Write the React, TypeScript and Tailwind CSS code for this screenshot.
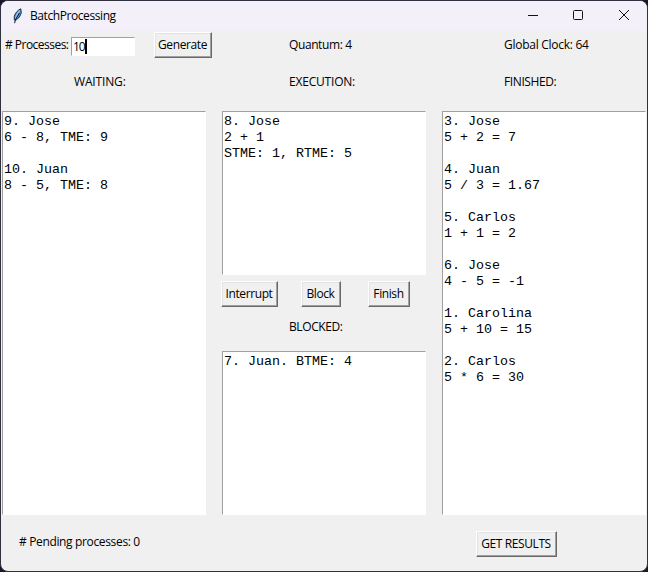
import type { ReactNode } from "react";

const waiting = ["9. Jose", "6 - 8, TME: 9", "", "10. Juan", "8 - 5, TME: 8"];
const execution = ["8. Jose", "2 + 1", "STME: 1, RTME: 5"];
const blocked = ["7. Juan. BTME: 4"];
const finished = [
  "3. Jose", "5 + 2 = 7", "",
  "4. Juan", "5 / 3 = 1.67", "",
  "5. Carlos", "1 + 1 = 2", "",
  "6. Jose", "4 - 5 = -1", "",
  "1. Carolina", "5 + 10 = 15", "",
  "2. Carlos", "5 * 6 = 30",
];

function TextArea({ lines, className }: { lines: string[]; className: string }) {
  return (
    <div
      className={`w-[204px] shrink-0 border border-t-[#a0a0a0] border-r-white border-b-white border-l-[#a0a0a0] bg-white pt-[2px] pl-[1px] font-['Liberation_Mono',monospace] text-[13.333px] leading-4 tracking-normal whitespace-pre text-black ${className}`}
    >
      {lines.map((line, i) => (
        <div key={i} className="h-4">{line}</div>
      ))}
    </div>
  );
}

function Button({ children, className }: { children: ReactNode; className: string }) {
  return (
    <button
      className={`h-[26px] shrink-0 border-t border-r border-b border-l border-t-white border-r-[#696969] border-b-[#696969] border-l-white bg-[#f0f0f0] pr-[1px] text-center leading-[22px] whitespace-nowrap shadow-[inset_-1px_-1px_0_#a0a0a0,inset_1px_1px_0_#e3e3e3] ${className}`}
    >
      {children}
    </button>
  );
}

function Feather() {
  return (
    <svg className="ml-[11px] h-4 w-3" viewBox="0 0 12 16">
      <path d="M8.8 .8C6 1.8 3.2 5 2.3 8.2l-.1 3.6 1.4.5C6.4 11 8.8 7.4 9.3 4.6Z" fill="#4b93e0" stroke="#1b2430" strokeWidth=".9" />
      <path d="M7.6 2.6C5.6 5 4.4 7.6 3.4 10.4" stroke="#9ccbf7" strokeWidth="1.1" fill="none" />
      <path d="M7.4 5 3.4 11.7 2.6 15.2" stroke="#10151c" strokeWidth="1" fill="none" />
    </svg>
  );
}

export default function App() {
  return (
    <div className="h-[572px] w-[648px] overflow-hidden bg-[#16162a]">
      <div className="h-[572px] w-[648px] overflow-hidden rounded-[8px] border border-[#30303f] bg-[#f0f0f0] font-['Open_Sans','Noto_Sans',sans-serif] text-[12px] leading-4 tracking-[-0.4px] text-black">
        <header className="flex h-[30px] items-center bg-[#f3f0f9]">
          <Feather />
          <span className="ml-[6px] tracking-[-0.42px]">BatchProcessing</span>
          <svg className="ml-auto h-[30px] w-[138px]" viewBox="0 0 138 30" fill="none" stroke="#111" strokeWidth="1">
            <path d="M19 14.5h10" />
            <rect x="64.5" y="9.5" width="9" height="9" rx="1" />
            <path d="m110 9 10 10m0-10-10 10" />
          </svg>
        </header>

        <div className="flex h-[32px] items-start">
          <span className="mt-[6px] ml-[4px] w-[66px] tracking-[-0.52px] whitespace-nowrap"># Processes:</span>
          <div className="mt-[6px] flex h-[19px] w-[64px] items-center border border-t-[#a0a0a0] border-r-white border-b-white border-l-[#a0a0a0] bg-white pl-[1px]">
            <span className="tracking-[-1px]">10</span>
            <span className="h-[15px] w-[2px] bg-black" />
          </div>
          <Button className="mt-[1px] ml-[19px] w-[58px]">Generate</Button>
          <span className="mt-[6px] ml-[77px] w-[215px]">Quantum: 4</span>
          <span className="mt-[6px] tracking-[-0.27px]">Global Clock: 64</span>
        </div>

        <div className="flex h-[48px] pt-[11px] pl-[73px]">
          <span className="w-[215px] tracking-[-0.15px]">WAITING:</span>
          <span className="w-[215px] tracking-[-0.2px]">EXECUTION:</span>
          <span>FINISHED:</span>
        </div>

        <main className="flex h-[404px] gap-[16px] pl-[1px]">
          <TextArea lines={waiting} className="h-[404px]" />
          <section className="flex w-[204px] flex-col">
            <TextArea lines={execution} className="h-[164px]" />
            <div className="-ml-[1px] flex h-[38px] pt-[6px]">
              <Button className="w-[57px]">Interrupt</Button>
              <Button className="ml-[23px] w-[40px]">Block</Button>
              <Button className="ml-[27px] w-[42px]">Finish</Button>
            </div>
            <span className="h-[38px] pt-[6px] pl-[67px]">BLOCKED:</span>
            <TextArea lines={blocked} className="h-[164px]" />
          </section>
          <TextArea lines={finished} className="h-[404px]" />
        </main>

        <footer className="flex h-[56px] pt-[16px] pl-[18px]">
          <span className="mt-[3px] w-[457px] tracking-[-0.35px]"># Pending processes: 0</span>
          <Button className="w-[81px]">GET RESULTS</Button>
        </footer>
      </div>
    </div>
  );
}
